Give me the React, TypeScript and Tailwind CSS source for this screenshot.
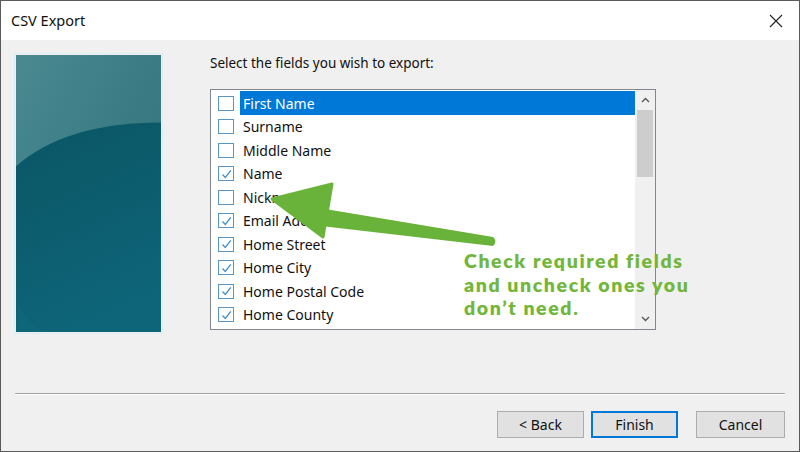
import React from "react";

const fields = [
  { label: "First Name", checked: false },
  { label: "Surname", checked: false },
  { label: "Middle Name", checked: false },
  { label: "Name", checked: true },
  { label: "Nickname", checked: false },
  { label: "Email Address", checked: true },
  { label: "Home Street", checked: true },
  { label: "Home City", checked: true },
  { label: "Home Postal Code", checked: true },
  { label: "Home County", checked: true },
];

const note = ["Check required fields", "and uncheck ones you", "don’t need."];

const ui = { fontFamily: '"Segoe UI", "Noto Sans", "Open Sans", sans-serif' };

function CheckBox({ checked }: { checked: boolean }) {
  return (
    <span className="flex h-[15px] w-[16px] shrink-0 items-center justify-center border border-[#5b95c4] bg-white">
      {checked && (
        <svg width="13" height="12" viewBox="0 0 13 12">
          <path d="M2.5 6.5 L5.3 9.4 L10.8 2.3" fill="none" stroke="#3f8fd0" strokeWidth="1.3" />
        </svg>
      )}
    </span>
  );
}

function Button({ label, primary }: { label: string; primary?: boolean }) {
  return (
    <button
      className={
        "flex h-[27px] w-full items-center justify-center bg-[#e1e1e1] text-[14px] text-[#111] " +
        (primary ? "border-2 border-[#0078d7]" : "border border-[#adadad]")
      }
      style={ui}
    >
      {label}
    </button>
  );
}

export default function App() {
  return (
    <div className="relative flex h-[452px] w-[800px] flex-col border border-[#5a5a5a] bg-[#f0f0f0]" style={ui}>
      {/* title bar */}
      <div className="flex h-[39px] items-center justify-between bg-white pl-[10px] pr-[16px]">
        <span className="text-[14.5px] text-[#111]">CSV Export</span>
        <svg width="14" height="14" viewBox="0 0 14 14">
          <path d="M1 1 L13 13 M13 1 L1 13" stroke="#222" strokeWidth="1.1" />
        </svg>
      </div>

      {/* body */}
      <div className="flex flex-1 flex-col">
        <div className="flex pl-[13px] pt-[13px]">
          <div className="h-[281px] w-[149px] border border-[#dceef1] p-px">
            <svg width="100%" height="100%" viewBox="0 0 145 279" preserveAspectRatio="none">
              <defs>
                <linearGradient id="top" x1="0" y1="0" x2="1" y2="1">
                  <stop offset="0" stopColor="#4a8990" />
                  <stop offset="1" stopColor="#2b6d78" />
                </linearGradient>
                <linearGradient id="bot" x1="0" y1="0" x2="0.3" y2="1">
                  <stop offset="0" stopColor="#0a5664" />
                  <stop offset="1" stopColor="#0e6478" />
                </linearGradient>
              </defs>
              <rect width="145" height="279" fill="url(#top)" />
              <path d="M0 112 Q 50 68 145 68 L145 279 L0 279 Z" fill="url(#bot)" />
              <path d="M2 250 Q 10 272 30 279 L0 279 Z" fill="#0f6a7c" opacity="0.6" />
            </svg>
          </div>

          <div className="ml-[47px] flex flex-col">
            <div className="text-[13.5px] text-[#111]">Select the fields you wish to export:</div>
            <div className="mt-[16px] flex h-[241px] w-[446px] border border-[#82878f] bg-white">
              <div className="flex flex-1 flex-col pt-px">
                {fields.map((f, i) => (
                  <div key={f.label} className="flex h-[23.5px] items-center">
                    <span className="ml-[7px]">
                      <CheckBox checked={f.checked} />
                    </span>
                    <span
                      className={
                        "ml-[6px] flex h-full flex-1 items-center pl-[3px] text-[14px] " +
                        (i === 0 ? "bg-[#0078d7] text-white" : "text-[#111]")
                      }
                    >
                      {f.label}
                    </span>
                  </div>
                ))}
              </div>
              <div className="flex w-[20px] flex-col bg-[#f0f0f0]">
                <div className="flex h-[20px] items-center justify-center">
                  <svg width="9" height="6" viewBox="0 0 9 6">
                    <path d="M1 5 L4.5 1.5 L8 5" fill="none" stroke="#555" strokeWidth="1.3" />
                  </svg>
                </div>
                <div className="mx-[2px] h-[67px] bg-[#cdcdcd]" />
                <div className="flex-1" />
                <div className="flex h-[20px] items-center justify-center">
                  <svg width="9" height="6" viewBox="0 0 9 6">
                    <path d="M1 1 L4.5 4.5 L8 1" fill="none" stroke="#555" strokeWidth="1.3" />
                  </svg>
                </div>
              </div>
            </div>
          </div>
        </div>

        {/* separator */}
        <div className="ml-[14px] mr-[14px] mt-[59px] border-t border-b border-t-[#a0a0a0] border-b-white" />

        {/* buttons */}
        <div className="mt-[16px] flex justify-end pr-[14px]">
          <div className="grid grid-cols-[87px_87px] gap-[7px]">
            <Button label="< Back" />
            <Button label="Finish" primary />
          </div>
          <div className="ml-[18px] w-[89px]">
            <Button label="Cancel" />
          </div>
        </div>
      </div>

      {/* annotation arrow */}
      <svg className="pointer-events-none absolute left-0 top-0" width="800" height="452">
        <path d="M300 204 L492 236 Q497 240 492 245 L303 223 Z" fill="#69b33b" />
        <path d="M271 198 L331 183 L322 236 Z" fill="#69b33b" strokeLinejoin="round" stroke="#69b33b" strokeWidth="3" />
      </svg>

      {/* annotation text */}
      <div
        className="absolute left-[463px] top-[248px] flex flex-col text-[19.5px] font-extrabold tracking-[1.6px] text-[#72b63c]"
        style={{ fontFamily: 'Lato, "Open Sans", sans-serif' }}
      >
        {note.map((line) => (
          <div key={line} className="h-[23.5px] leading-[23.5px]">
            {line}
          </div>
        ))}
      </div>
    </div>
  );
}
